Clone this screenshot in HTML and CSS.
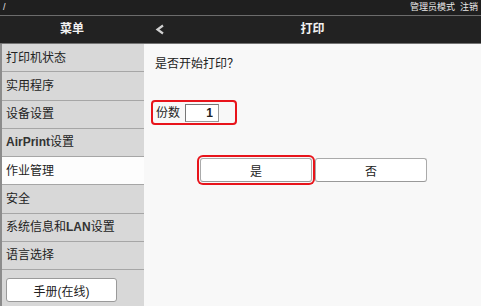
FILE: index.html
```html
<!DOCTYPE html>
<html lang="zh-CN">
<head>
    <meta charset="UTF-8">
    <meta name="viewport" content="width=device-width, initial-scale=1.0">
    <title>打印</title>
    <link rel="stylesheet" href="styles.css">
</head>
<body>
    <div class="topbar">
        <span class="path">/</span>
        <span class="admin">管理员模式&nbsp;&nbsp;注销</span>
    </div>
    <div class="header">
        <div class="header-menu">菜单</div>
        <div class="header-main">
            <span class="back">
                <svg width="10" height="11" viewBox="0 0 10 11">
                    <path d="M8 1.5 L2.5 5.5 L8 9.5" fill="none" stroke="#d0d0d0" stroke-width="2.2"/>
                </svg>
            </span>
            <span class="title">打印</span>
        </div>
    </div>
    <div class="content">
        <div class="sidebar">
            <div class="item">打印机状态</div>
            <div class="item">实用程序</div>
            <div class="item">设备设置</div>
            <div class="item"><b class="latin">AirPrint</b>设置</div>
            <div class="item active">作业管理</div>
            <div class="item">安全</div>
            <div class="item">系统信息和<b class="latin">LAN</b>设置</div>
            <div class="item">语言选择</div>
            <div class="manual-wrap">
                <button class="manual">手册(在线)</button>
            </div>
        </div>
        <div class="main">
            <p class="question">是否开始打印<span class="punct">？</span></p>
            <div class="copies">
                <label for="copies">份数</label>
                <input type="text" id="copies" value="1">
            </div>
            <div class="actions">
                <button class="btn focused">是</button>
                <button class="btn">否</button>
            </div>
        </div>
    </div>
</body>
</html>
```

FILE: styles.css
```css
body {
    margin: 0;
    padding: 0;
    width: 481px;
    height: 308px;
    background-color: #fff;
    font-family: "Liberation Sans", "Noto Sans CJK SC", sans-serif;
    font-size: 12px;
    color: #222;
    overflow: hidden;
}
.topbar {
    height: 15px;
    background-color: #1f1f1f;
    border-bottom: 1px solid #6c6c6c;
    display: flex;
    justify-content: space-between;
    align-items: center;
    padding: 0 3px;
    color: #e8e8e8;
    font-size: 9px;
    line-height: 15px;
}
.header {
    height: 27px;
    background-color: #222;
    border-bottom: 1px solid #747474;
    display: flex;
    color: #f2f2f2;
    font-weight: bold;
    line-height: 27px;
}
.header-menu {
    width: 144px;
    text-align: center;
}
.header-main {
    flex: 1;
    display: grid;
    grid-template-columns: 1fr auto 1fr;
    align-items: center;
}
.back {
    padding-left: 11px;
    display: flex;
    align-items: center;
}
.content {
    display: flex;
    height: 262px;
}
.sidebar {
    width: 142px;
    border-left: 2px solid #8c8c8c;
    background-color: #d8d8d8;
}
.item {
    box-sizing: border-box;
    height: 28.25px;
    border-bottom: 1px solid #a6a6a6;
    padding-left: 4px;
    display: flex;
    align-items: center;
    line-height: 16px;
}
.item.active {
    background-color: #fdfdfd;
}
.latin {
    font-weight: bold;
    color: #333;
}
.manual-wrap {
    padding: 8px 0 0 4px;
}
.manual {
    width: 111px;
    height: 24px;
    background-color: #fff;
    border: 1px solid #9a9a9a;
    border-radius: 3px;
    font-family: inherit;
    font-size: 12px;
    color: #222;
    padding: 0;
}
.main {
    flex: 1;
    background-color: #f8f8f8;
    padding: 0 0 0 7px;
}
.question {
    margin: 0;
    padding: 11px 0 0 4px;
    line-height: 16px;
}
.punct {
    font-family: "Noto Sans CJK TC", sans-serif;
}
.copies {
    box-sizing: border-box;
    margin-top: 28px;
    width: 86px;
    height: 25px;
    border: 2px solid #e8141b;
    border-radius: 4px;
    display: flex;
    align-items: center;
    padding-left: 3px;
}
.copies label {
    line-height: 16px;
    margin-right: 5px;
}
.copies input {
    box-sizing: border-box;
    width: 34px;
    height: 18px;
    border: 1px solid #999;
    border-top-color: #777;
    border-left-color: #777;
    background-color: #fff;
    text-align: right;
    padding: 0 5px 0 0;
    font-family: inherit;
    font-size: 12px;
    font-weight: bold;
    color: #222;
}
.actions {
    display: flex;
    gap: 3px;
    margin: 33px 0 0 49px;
}
.btn {
    width: 112px;
    height: 24px;
    background-color: #fff;
    border: 1px solid #aaa;
    border-bottom-color: #999;
    border-radius: 3px;
    font-family: inherit;
    font-size: 12px;
    color: #222;
    padding: 0;
}
.btn.focused {
    box-shadow: 0 0 0 1px #f8f8f8, 0 0 0 3px #e8141b;
}
```
